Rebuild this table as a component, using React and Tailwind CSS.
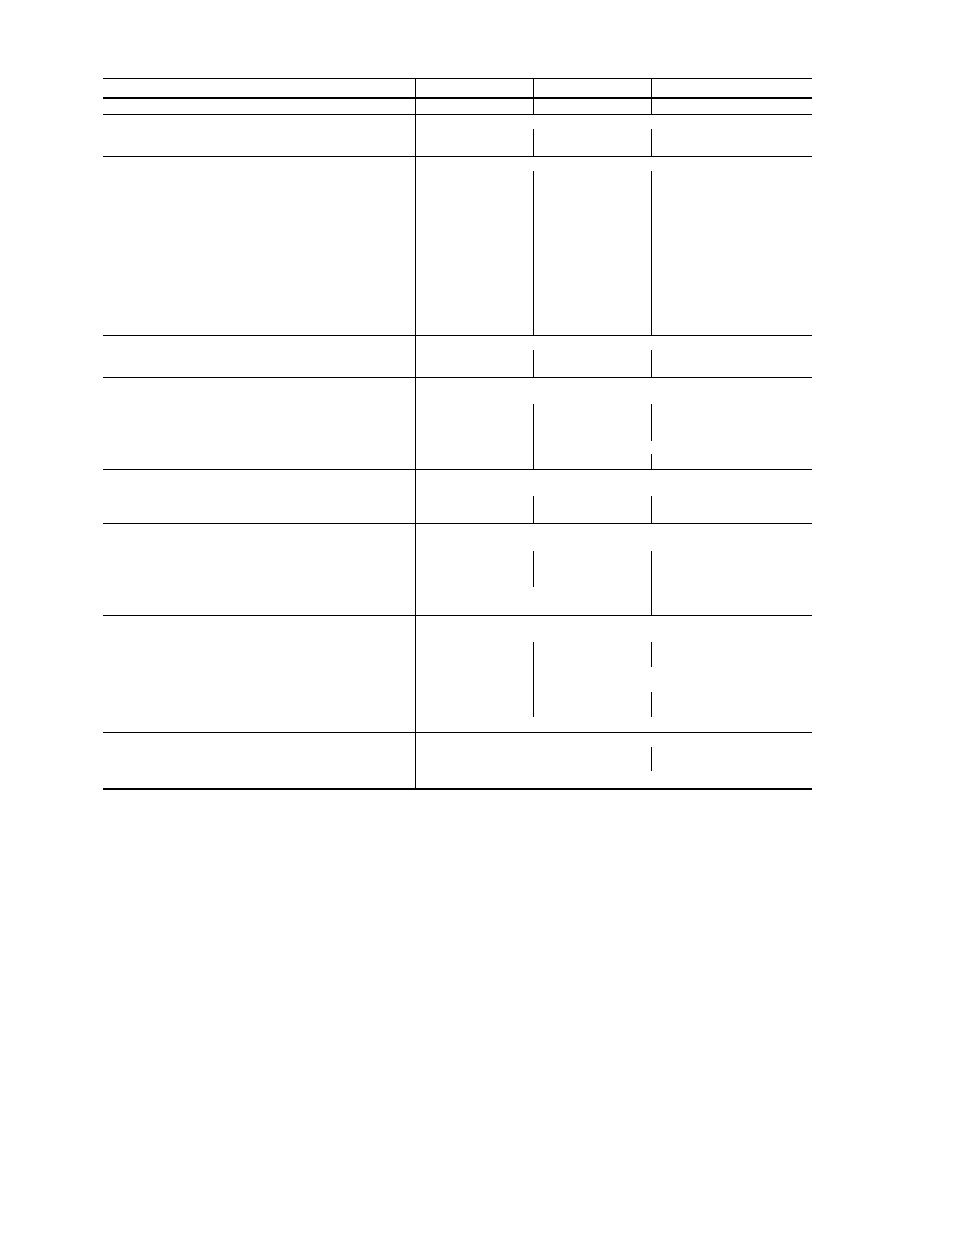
import React from 'react';

// each row: content height + the rule segments drawn in column 3 and 4
const rows = [
  { height: 'h-[18px]', bottom: 'border-b-2', col3: ['grow'], col4: ['grow'] },
  { height: 'h-[15px]', bottom: 'border-b', col3: ['grow'], col4: ['grow'] },
  { height: 'h-[41px]', bottom: 'border-b', col3: ['mt-[14px] grow'], col4: ['mt-[14px] grow'] },
  { height: 'h-[178px]', bottom: 'border-b', col3: ['mt-[14px] grow'], col4: ['mt-[14px] grow'] },
  { height: 'h-[41px]', bottom: 'border-b', col3: ['mt-[14px] grow'], col4: ['mt-[14px] grow'] },
  { height: 'h-[91px]', bottom: 'border-b', col3: ['mt-[26px] grow'], col4: ['mt-[26px] h-[37px]', 'mt-[13px] grow'] },
  { height: 'h-[53px]', bottom: 'border-b', col3: ['mt-[26px] grow'], col4: ['mt-[26px] grow'] },
  { height: 'h-[91px]', bottom: 'border-b', col3: ['mt-[27px] h-[36px]'], col4: ['mt-[27px] grow'] },
  { height: 'h-[116px]', bottom: 'border-b', col3: ['mt-[26px] h-[75px]'], col4: ['mt-[26px] h-[25px]', 'mt-[25px] h-[25px]'] },
  { height: 'h-[55px]', bottom: 'border-b-2', col3: [], col4: ['mt-[14px] h-[24px]'] },
];

const RuleCell = ({ width, segments }) => (
  <div className={`flex flex-col ${width}`}>
    {segments.map((seg, i) => (
      <div key={i} className={`border-l border-black ${seg}`} />
    ))}
  </div>
);

const App = () => {
  return (
    <div className="min-h-screen bg-white pt-[78px] pl-[103px]">
      <div className="w-[709px] border-t border-black">
        {rows.map((row, index) => (
          <div key={index} className={`flex border-black ${row.bottom}`}>
            {/* Label column */}
            <div className={`w-[312px] ${row.height}`}></div>
            {/* Value columns */}
            <div className="w-[118px] border-l border-black"></div>
            <RuleCell width="w-[118px]" segments={row.col3} />
            <RuleCell width="w-[161px]" segments={row.col4} />
          </div>
        ))}
      </div>
    </div>
  );
};

export default App;
